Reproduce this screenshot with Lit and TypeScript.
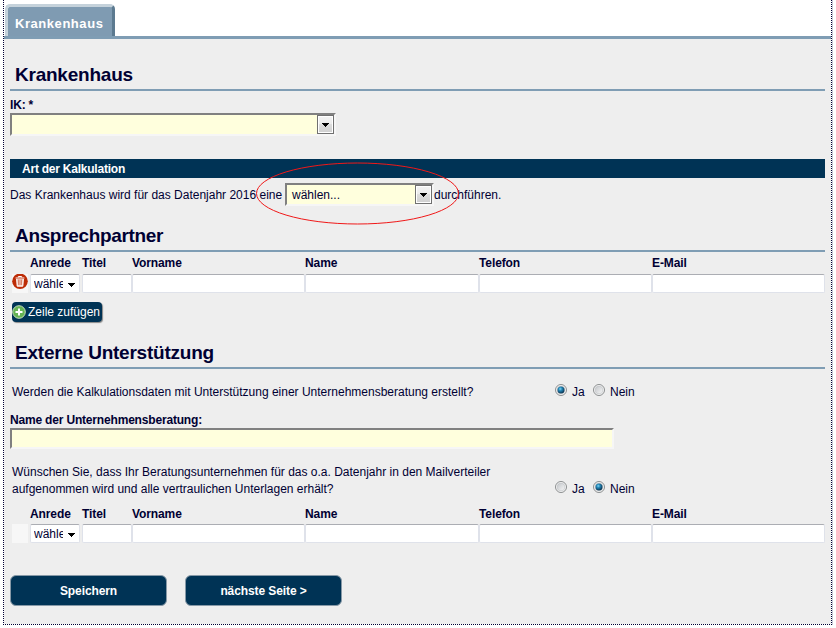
import { LitElement, html, css, svg } from "lit";
import { customElement, property } from "lit/decorators.js";

const arrow = html`<svg class="arrow" width="7" height="4" viewBox="0 0 7 4" shape-rendering="crispEdges"><path d="M0 0H7V1H6V2H5V3H4V4H3V3H2V2H1V1H0Z" fill="#000" /></svg>`;

@customElement("radio-dot")
export class RadioDot extends LitElement {
  @property({ type: Boolean }) on = false;
  static styles = css`
    :host { display: block; width: 13px; height: 13px; }
    svg { display: block; }
  `;
  render() {
    return html`<svg width="13" height="13" viewBox="0 0 13 13">
      <defs>
        <linearGradient id="g" x1="0" y1="0" x2="1" y2="1"><stop offset="0" stop-color="#c2c5c9" /><stop offset="1" stop-color="#f8f8f8" /></linearGradient>
        <radialGradient id="b" cx=".4" cy=".35" r=".65"><stop offset="0" stop-color="#7fd6f5" /><stop offset=".4" stop-color="#2385b5" /><stop offset="1" stop-color="#0b3350" /></radialGradient>
      </defs>
      <circle cx="6" cy="6" r="5.5" fill="#f6f6f6" stroke="#8b8e8f" />
      <circle cx="6" cy="6" r="3.9" fill="url(#g)" stroke="#c0c3c6" stroke-width=".6" />
      ${this.on ? svg`<circle cx="6" cy="6" r="3.5" fill="url(#b)" />` : ""}
    </svg>`;
  }
}

@customElement("contact-table")
export class ContactTable extends LitElement {
  @property({ type: Boolean }) removable = false;
  static styles = css`
    :host { display: block; color: #000033; font: 12px/14px "Liberation Sans", Arial, sans-serif; }
    .row { display: grid; grid-template-columns: 18px 52px 50px 173px 174px 173px 173px; margin-left: 2px; }
    .head { height: 17px; font-weight: bold; letter-spacing: -0.1px; }
    :host([removable]) .head { height: 18px; }
    .icon { width: 16px; height: 19px; background: #f7f7f7; }
    .icon svg { display: block; }
    .cell { box-sizing: border-box; height: 19px; background: #fff; border: 1px solid #dfe2ea; border-top-color: #abadb3; border-radius: 2px; }
    .pick { width: 50px; display: flex; align-items: center; padding: 1px 0 0 3px; gap: 5px; }
    .clip { width: 29px; overflow: hidden; white-space: nowrap; }
    .arrow { display: block; margin-top: 2px; }
  `;
  render() {
    return html`
      <div class="row head"><span></span><span>Anrede</span><span>Titel</span><span>Vorname</span><span>Name</span><span>Telefon</span><span>E-Mail</span></div>
      <div class="row">
        <div class="icon">${this.removable
          ? html`<svg width="16" height="19" viewBox="0 0 16 19">
              <circle cx="8" cy="7.3" r="7.8" fill="#bd2c06" />
              <path d="M4.6 5h6.8l-.6 7.2H5.2Z" fill="#f3cdc3" />
              <path d="M3.6 4h8.8M6.3 3.4V2.5h3.4v.9M4.6 5l.6 7.2h5.6l.6-7.2" fill="none" stroke="#fff" stroke-width="1" />
              <path d="M6.4 5.5l.2 5.5M8 5.5V11M9.6 5.5L9.4 11" fill="none" stroke="#c8502f" stroke-width=".6" />
            </svg>` : ""}</div>
        <div class="cell pick"><span class="clip">wähle</span>${arrow}</div>
        <div class="cell"></div><div class="cell"></div><div class="cell"></div><div class="cell"></div><div class="cell"></div>
      </div>`;
  }
}

@customElement("app-root")
export class AppRoot extends LitElement {
  static styles = css`
    :host { display: block; width: 836px; height: 628px; overflow: hidden; background: #fff; color: #000033; font: 12px/14px "Liberation Sans", Arial, sans-serif; white-space: nowrap; }
    .frame { box-sizing: border-box; width: 829px; height: 625px; margin-left: 3px; border: 1px dotted #000033; border-top: 0; box-shadow: 1px 0 #c9cbd8; }
    .tabs { box-sizing: border-box; height: 39px; padding: 4px 0 0 1px; border-bottom: 3px solid #7f9db4; }
    .tab { box-sizing: border-box; width: 110px; height: 32px; padding: 9px 0 0 7px; background: #7f9bb2; border: solid #c5d2db; border-width: 3px 3px 0 3px; border-right-color: #5c7a90; border-radius: 5px 5px 0 0; color: #fff; font-size: 13px; line-height: 15px; font-weight: bold; letter-spacing: 0.55px; }
    .body { box-sizing: border-box; height: 585px; padding: 0 6px; background: #eee; display: flex; flex-direction: column; }
    .body > * { flex-shrink: 0; }
    h2 { box-sizing: border-box; margin: 0; padding-left: 5px; border-bottom: 2px solid #7f9db4; font-size: 19px; line-height: 22px; font-weight: bold; letter-spacing: -0.23px; }
    .h1 { height: 52px; padding-top: 25px; }
    .h2 { height: 41px; padding-top: 14px; letter-spacing: -0.34px; }
    .h3 { height: 47px; padding-top: 20px; }
    .label { font-weight: bold; letter-spacing: -0.18px; }
    .ik { margin-top: 7px; height: 15px; }
    .field { box-sizing: border-box; background: #ffffdd; border: 2px solid; border-color: #808080 #f6f6f6 #f6f6f6 #808080; display: flex; justify-content: space-between; }
    .wide { width: 326px; height: 23px; }
    .small { width: 149px; height: 23px; padding-left: 5px; line-height: 20px; }
    .drop { box-sizing: border-box; width: 17px; height: 19px; border: 1px solid #707070; box-shadow: inset 0 0 0 1px #fff; background: linear-gradient(#f3f3f3, #ebebeb 50%, #ddd 50%, #cfcfcf); display: flex; align-items: center; justify-content: center; }
    .bar { height: 19px; margin-top: 23px; padding-left: 12px; background: #003355; color: #fff; font-weight: bold; line-height: 20px; letter-spacing: -0.23px; }
    .sentence { position: relative; height: 28px; padding-top: 5px; display: flex; line-height: 24px; }
    .before { width: 275px; }
    .ring { position: absolute; left: 245px; top: -16px; }
    .add { box-sizing: border-box; width: 90px; height: 20px; margin: 9px 0 0 2px; border-radius: 4px; background: #003355; box-shadow: 1px 1px 1px #888; color: #fff; display: flex; align-items: center; gap: 2px; }
    .add svg { flex: none; }
    .question { display: flex; height: 14px; margin-top: 16px; padding-left: 2px; }
    .question p { margin: 0; width: 543px; line-height: 17px; margin-top: -1px; }
    .answers { display: flex; align-items: flex-start; }
    .answers radio-dot { margin-top: -1px; }
    .ja { margin-left: 4px; width: 21px; }
    .nein { margin-left: 4px; }
    .firm { margin-top: 14px; height: 15px; }
    .long { width: 604px; height: 21px; }
    .second { height: 31px; margin-top: 16px; }
    .second .answers { padding-top: 17px; }
    .t1 { margin-top: 4px; }
    .t2 { margin-top: 11px; }
    .buttons { display: flex; gap: 18px; margin-top: 32px; }
    .btn { box-sizing: border-box; width: 157px; height: 31px; border: 1px solid #8799a7; border-radius: 6px; background: #003355; color: #fff; font-weight: bold; line-height: 30px; text-align: center; letter-spacing: -0.1px; }
  `;
  render() {
    return html`<div class="frame">
      <div class="tabs"><div class="tab">Krankenhaus</div></div>
      <div class="body">
        <h2 class="h1">Krankenhaus</h2>
        <div class="label ik">IK: *</div>
        <div class="field wide"><span></span><span class="drop">${arrow}</span></div>
        <div class="bar">Art der Kalkulation</div>
        <div class="sentence">
          <span class="before">Das Krankenhaus wird für das Datenjahr 2016 eine</span>
          <div class="field small"><span>wählen...</span><span class="drop">${arrow}</span></div>
          <span>durchführen.</span>
          <svg class="ring" width="206" height="64" viewBox="0 0 206 64"><ellipse cx="102.5" cy="31.5" rx="101" ry="30.5" fill="none" stroke="#f01818" /></svg>
        </div>
        <h2 class="h2">Ansprechpartner</h2>
        <contact-table class="t1" removable></contact-table>
        <div class="add"><svg width="14" height="14" viewBox="0 0 14 14"><circle cx="7" cy="7" r="6.3" fill="#65b354" stroke="#c5dfbd" /><path d="M7 3.5v7M3.5 7h7" stroke="#fff" stroke-width="2" /></svg><span>Zeile zufügen</span></div>
        <h2 class="h3">Externe Unterstützung</h2>
        <div class="question"><p>Werden die Kalkulationsdaten mit Unterstützung einer Unternehmensberatung erstellt?</p>
          <div class="answers"><radio-dot on></radio-dot><span class="ja">Ja</span><radio-dot></radio-dot><span class="nein">Nein</span></div></div>
        <div class="label firm">Name der Unternehmensberatung:</div>
        <div class="field long"></div>
        <div class="question second"><p>Wünschen Sie, dass Ihr Beratungsunternehmen für das o.a. Datenjahr in den Mailverteiler<br />aufgenommen wird und alle vertraulichen Unterlagen erhält?</p>
          <div class="answers"><radio-dot></radio-dot><span class="ja">Ja</span><radio-dot on></radio-dot><span class="nein">Nein</span></div></div>
        <contact-table class="t2"></contact-table>
        <div class="buttons"><div class="btn">Speichern</div><div class="btn">nächste Seite &gt;</div></div>
      </div>
    </div>`;
  }
}
